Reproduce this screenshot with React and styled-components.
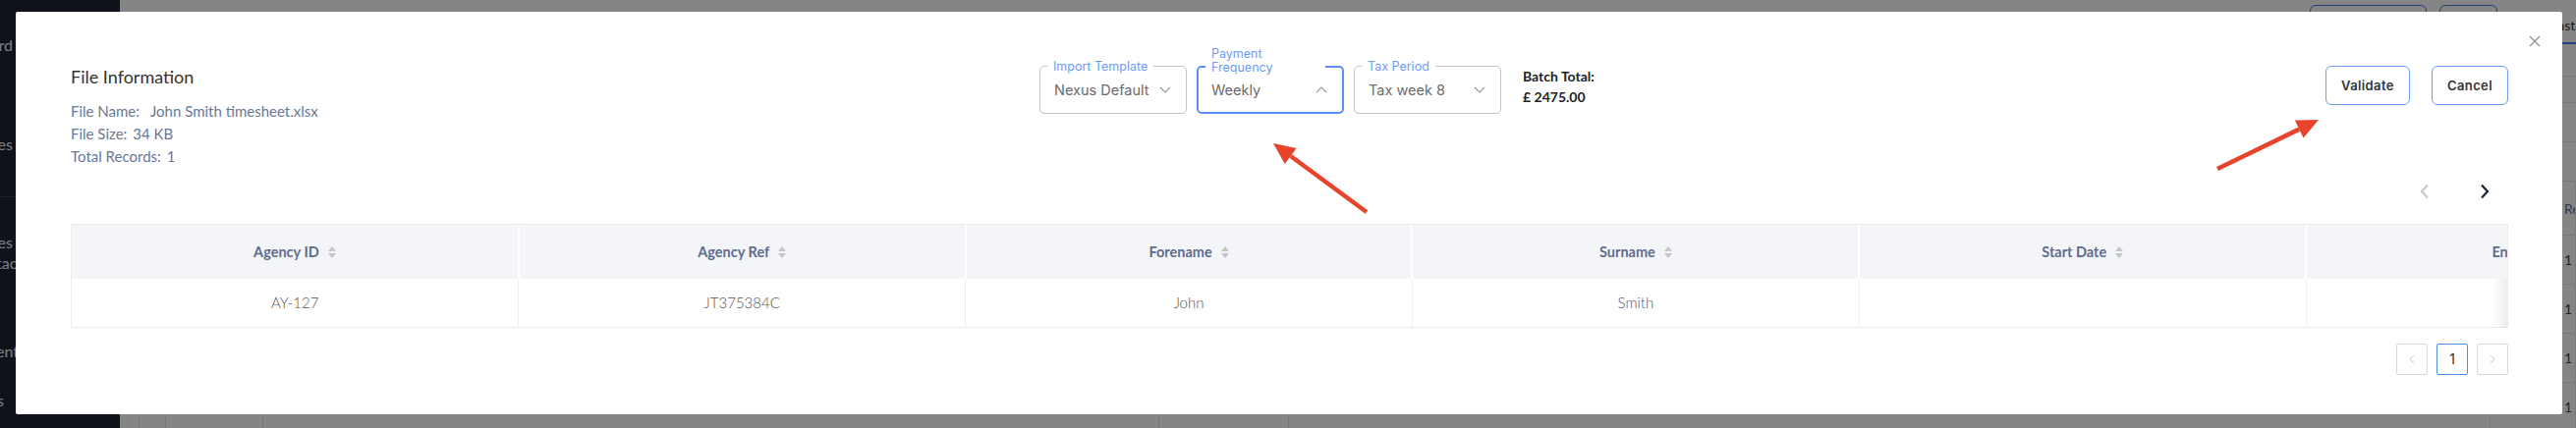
import styled, { createGlobalStyle } from "styled-components";

const GlobalStyle = createGlobalStyle`
  html, body { margin: 0; padding: 0; height: 100%; overflow: hidden; }
  body { font-family: Lato, "Open Sans", sans-serif; background: #fff; }
  * { box-sizing: border-box; }
`;

/* ---------- page behind the dialog ---------- */

const Page = styled.div`
  display: flex;
  height: 100vh;
`;

const Sidebar = styled.nav`
  width: 122px;
  flex-shrink: 0;
  background: #1d2434;
  display: flex;
  flex-direction: column;
  color: #f0f2f6;
  font-size: 16px;
`;

const NavItem = styled.div`
  margin-top: ${(p) => p.$mt}px;
  display: flex;
  flex-direction: column;
  justify-content: center;
  min-height: ${(p) => p.$h || 50}px;
`;

const NavLine = styled.div`
  display: flex;
  justify-content: flex-end;
  width: ${(p) => p.$end}px;
  line-height: 21px;
  white-space: nowrap;
  span { flex-shrink: 0; }
`;

const NavDivider = styled.div`
  margin-top: ${(p) => p.$mt}px;
  border-top: 1px solid #3a4458;
`;

const Main = styled.main`
  flex: 1;
  min-width: 0;
  background: #fff;
  display: flex;
  flex-direction: column;
  overflow: hidden;
  font-size: 14px;
  color: #333;
`;

const TopBar = styled.div`
  display: flex;
  justify-content: flex-end;
  align-items: flex-start;
  gap: 13px;
  height: 45px;
  flex-shrink: 0;
`;

const GhostButton = styled.div`
  margin-top: 5px;
  width: ${(p) => p.$w}px;
  height: 40px;
  border: 1px solid #4a7cf0;
  border-radius: 6px;
`;

const Tab = styled.div`
  margin-left: 27px;
  width: 40px;
  height: 45px;
  padding: 8px 0 0 13px;
  display: flex;
  align-items: center;
  border-bottom: 2px solid #4a7cf0;
  white-space: nowrap;
  overflow: hidden;
  color: #333;
`;

const FilterRow = styled.div`
  height: ${(p) => p.$h}px;
  flex-shrink: 0;
  border-bottom: 1px solid #e6e6e6;
`;

const BgTable = styled.div`
  display: grid;
  grid-template-columns: 20px 27px 99px 912px 132px 1223px 1fr;
  grid-auto-rows: 50px;
  grid-template-rows: 55px;
`;

const BgCell = styled.div`
  border-right: 1px solid #e6e6e6;
  border-bottom: 1px solid #e6e6e6;
  display: flex;
  align-items: center;
  padding-left: ${(p) => p.$pl || 0}px;
  white-space: nowrap;
  overflow: hidden;
  color: ${(p) => (p.$head ? "#5b6a8c" : "#444")};
`;

/* ---------- dialog ---------- */

const Overlay = styled.div`
  position: fixed;
  inset: 0;
  background: rgba(0, 0, 0, 0.48);
  display: flex;
  padding: 12px 14px 14px 16px;
`;

const Modal = styled.div`
  position: relative;
  flex: 1;
  background: #fff;
  border-radius: 2px;
  padding: 55px 55px 0 56px;
  display: flex;
  flex-direction: column;
  min-width: 0;
`;

const CloseButton = styled.button`
  position: absolute;
  top: 24px;
  right: 22px;
  width: 12px;
  height: 12px;
  padding: 0;
  border: 0;
  background: none;
  display: flex;
`;

const Header = styled.div`
  display: grid;
  grid-template-columns: 986px auto 1fr;
  align-items: start;
`;

const InfoBlock = styled.div`
  display: flex;
  flex-direction: column;
`;

const Title = styled.h2`
  margin: 0 0 13px;
  font-size: 18px;
  line-height: 22px;
  font-weight: 400;
  color: #333;
`;

const InfoLine = styled.div`
  font-size: 15px;
  line-height: 23px;
  color: #6a7795;
  span { margin-right: ${(p) => p.$gap}px; }
`;

const Controls = styled.div`
  display: flex;
  align-items: flex-start;
  gap: 10px;
`;

const Field = styled.div`
  position: relative;
  width: 150px;
  height: 49px;
  border: ${(p) => (p.$focused ? "2px solid #5b8ff9" : "1px solid #c4c4c4")};
  border-radius: 5px;
  display: flex;
  align-items: center;
  justify-content: space-between;
  padding: ${(p) => (p.$focused ? "0 15px 0 13px" : "0 15px 0 14px")};
  font-family: Inter, "Open Sans", sans-serif;
  font-size: 14.5px;
  color: #6b6b6b;
`;

const FieldLabel = styled.span`
  position: absolute;
  left: 7px;
  bottom: calc(100% - 7px);
  padding: 0 6px;
  width: ${(p) => (p.$width ? `${p.$width}px` : "auto")};
  background: #fff;
  font-size: 12.5px;
  line-height: 14px;
  color: #6d9cf5;
  white-space: pre-line;
`;

const BatchTotal = styled.div`
  margin-left: 12px;
  font-size: 14px;
  line-height: 21px;
  font-weight: 700;
  color: #222;
`;

const Actions = styled.div`
  display: flex;
  justify-content: flex-end;
  gap: 22px;
`;

const ActionButton = styled.button`
  height: 40px;
  padding: 0 ${(p) => p.$px}px;
  border: 1px solid #6e9ff5;
  border-radius: 6px;
  background: #fff;
  font-family: Inter, "Open Sans", sans-serif;
  font-size: 13px;
  font-weight: 600;
  letter-spacing: 0.4px;
  color: #333;
`;

const NavRow = styled.div`
  display: flex;
  justify-content: flex-end;
  gap: 21px;
  margin: 4px 4px 0 0;
`;

const NavButton = styled.button`
  width: 40px;
  height: 40px;
  border: 0;
  background: none;
  display: flex;
  align-items: center;
  justify-content: center;
  color: ${(p) => (p.$disabled ? "#c8c8c8" : "#1b2434")};
`;

const TableWrap = styled.div`
  position: relative;
  margin-top: 13px;
  border: 1px solid #ececec;
  border-bottom: 0;
  overflow: hidden;
  &::after {
    content: "";
    position: absolute;
    right: 0;
    top: 55px;
    bottom: 0;
    width: 14px;
    background: linear-gradient(to left, rgba(0, 0, 0, 0.07), rgba(0, 0, 0, 0));
  }
`;

const Table = styled.table`
  width: 2730px;
  table-layout: fixed;
  border-collapse: collapse;
`;

const Th = styled.th`
  height: 55px;
  background: #f4f5f9;
  border-right: 2px solid #fff;
  font-size: 14.5px;
  font-weight: 700;
  color: #5e6c8c;
  text-align: center;
  padding: 0;
  white-space: nowrap;
`;

const HeadInner = styled.span`
  display: inline-flex;
  align-items: center;
  gap: 9px;
`;

const Td = styled.td`
  height: 49px;
  border-right: 1px solid #eceef1;
  border-bottom: 1px solid #ececec;
  text-align: center;
  font-size: 15px;
  font-weight: 300;
  color: #555;
`;

const Pager = styled.div`
  display: flex;
  justify-content: flex-end;
  gap: 9px;
  margin-top: 16px;
`;

const PageBox = styled.div`
  width: 32px;
  height: 32px;
  border: 1px solid ${(p) => (p.$active ? "#4a90e2" : "#d9d9d9")};
  border-radius: 2px;
  display: flex;
  align-items: center;
  justify-content: center;
  font-family: Inter, sans-serif;
  font-size: 14px;
  color: #333;
`;

const Annotations = styled.svg`
  position: absolute;
  left: 0;
  top: 0;
  pointer-events: none;
  overflow: visible;
`;

/* ---------- small drawings ---------- */

const Chevron = ({ up }) => (
  <svg width="12" height="7" viewBox="0 0 12 7">
    <polyline
      points={up ? "1,6 6,1 11,6" : "1,1 6,6 11,1"}
      fill="none"
      stroke="#9a9a9a"
      strokeWidth="1.2"
    />
  </svg>
);

const SortIcon = () => (
  <svg width="8" height="12" viewBox="0 0 8 12">
    <polygon points="0,5 4,0 8,5" fill="#c6c6c6" />
    <polygon points="0,7 4,12 8,7" fill="#c6c6c6" />
  </svg>
);

const Arrow = ({ from, to }) => {
  const dx = to[0] - from[0];
  const dy = to[1] - from[1];
  const len = Math.hypot(dx, dy);
  const ux = dx / len;
  const uy = dy / len;
  const bx = to[0] - ux * 22;
  const by = to[1] - uy * 22;
  const px = -uy * 10;
  const py = ux * 10;
  return (
    <g>
      <line x1={from[0]} y1={from[1]} x2={bx} y2={by} stroke="#e8432b" strokeWidth="4.5" />
      <polygon
        points={`${to[0]},${to[1]} ${bx + px},${by + py} ${bx - px},${by - py}`}
        fill="#e8432b"
      />
    </g>
  );
};

const columns = ["Agency ID", "Agency Ref", "Forename", "Surname", "Start Date", "End Date"];
const row = ["AY-127", "JT375384C", "John", "Smith", "", ""];

const fields = [
  { label: "Import Template", value: "Nexus Default" },
  { label: "Payment\nFrequency", value: "Weekly", focused: true, labelWidth: 122 },
  { label: "Tax Period", value: "Tax week 8" },
];

function App() {
  return (
    <>
      <GlobalStyle />
      <Page>
        <Sidebar>
          <NavItem $mt={20}>
            <NavLine $end={13}><span>Dashboard</span></NavLine>
          </NavItem>
          <NavItem $mt={51}>
            <NavLine $end={13}><span>Invoices</span></NavLine>
          </NavItem>
          <NavDivider $mt={29} />
          <NavItem $mt={34} $h={43}>
            <NavLine $end={13}><span>Agencies</span></NavLine>
            <NavLine $end={30}><span>Contacts</span></NavLine>
          </NavItem>
          <NavItem $mt={54}>
            <NavLine $end={26}><span>Payments</span></NavLine>
          </NavItem>
          <NavItem $mt={0}>
            <NavLine $end={4}><span>Settings</span></NavLine>
          </NavItem>
        </Sidebar>
        <Main>
          <TopBar>
            <GhostButton $w={119} />
            <GhostButton $w={59} />
            <Tab>Past Timesheets</Tab>
          </TopBar>
          <FilterRow $h={33} />
          <FilterRow $h={27} />
          <FilterRow $h={40} />
          <FilterRow $h={40} />
          <BgTable>
            {[0, 1, 2, 3, 4].map((r) =>
              [0, 1, 2, 3, 4, 5, 6].map((c) => (
                <BgCell key={`${r}-${c}`} $head={r === 0} $pl={c === 6 ? 75 : 0}>
                  {c === 6 ? (r === 0 ? "Ref" : "1") : ""}
                </BgCell>
              ))
            )}
          </BgTable>
        </Main>
      </Page>

      <Overlay>
        <Modal>
          <CloseButton aria-label="Close">
            <svg width="12" height="12" viewBox="0 0 12 12">
              <path d="M1 1 L11 11 M11 1 L1 11" stroke="#8f8f8f" strokeWidth="1.3" />
            </svg>
          </CloseButton>

          <Header>
            <InfoBlock>
              <Title>File Information</Title>
              <InfoLine $gap={11}>
                <span>File Name:</span>John Smith timesheet.xlsx
              </InfoLine>
              <InfoLine $gap={6}>
                <span>File Size:</span>34 KB
              </InfoLine>
              <InfoLine $gap={6}>
                <span>Total Records:</span>1
              </InfoLine>
            </InfoBlock>

            <Controls>
              {fields.map((f) => (
                <Field key={f.value} $focused={f.focused}>
                  <FieldLabel $width={f.labelWidth}>{f.label}</FieldLabel>
                  {f.value}
                  <Chevron up={f.focused} />
                </Field>
              ))}
              <BatchTotal>
                Batch Total:
                <br />£ 2475.00
              </BatchTotal>
            </Controls>

            <Actions>
              <ActionButton $px={15}>Validate</ActionButton>
              <ActionButton $px={15}>Cancel</ActionButton>
            </Actions>
          </Header>

          <NavRow>
            <NavButton $disabled aria-label="Previous">
              <svg width="10" height="16" viewBox="0 0 10 16">
                <polyline points="8,1.5 2,8 8,14.5" fill="none" stroke="currentColor" strokeWidth="2.2" />
              </svg>
            </NavButton>
            <NavButton aria-label="Next">
              <svg width="10" height="16" viewBox="0 0 10 16">
                <polyline points="2,1.5 8,8 2,14.5" fill="none" stroke="currentColor" strokeWidth="2.2" />
              </svg>
            </NavButton>
          </NavRow>

          <TableWrap>
            <Table>
              <thead>
                <tr>
                  {columns.map((c) => (
                    <Th key={c}>
                      <HeadInner>
                        {c}
                        <SortIcon />
                      </HeadInner>
                    </Th>
                  ))}
                </tr>
              </thead>
              <tbody>
                <tr>
                  {row.map((v, i) => (
                    <Td key={i}>{v}</Td>
                  ))}
                </tr>
              </tbody>
            </Table>
          </TableWrap>

          <Pager>
            <PageBox>
              <svg width="6" height="10" viewBox="0 0 6 10">
                <polyline points="5,1 1,5 5,9" fill="none" stroke="#c9c9c9" strokeWidth="1" />
              </svg>
            </PageBox>
            <PageBox $active>1</PageBox>
            <PageBox>
              <svg width="6" height="10" viewBox="0 0 6 10">
                <polyline points="1,1 5,5 1,9" fill="none" stroke="#c9c9c9" strokeWidth="1" />
              </svg>
            </PageBox>
          </Pager>

          <Annotations width="2592" height="410">
            <Arrow from={[1375, 204]} to={[1280, 134]} />
            <Arrow from={[2241, 160]} to={[2344, 110]} />
          </Annotations>
        </Modal>
      </Overlay>
    </>
  );
}

export default App;
